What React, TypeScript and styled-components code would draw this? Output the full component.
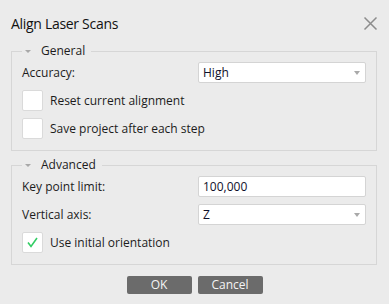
import React from 'react';
import styled, { createGlobalStyle } from 'styled-components';

const GlobalStyle = createGlobalStyle`
  html, body {
    margin: 0;
    padding: 0;
    background: #ebebeb;
  }
  body {
    font-family: 'Open Sans', 'Noto Sans', sans-serif;
    font-size: 12px;
    color: #1c1c1c;
  }
`;

const Dialog = styled.div`
  width: 389px;
  height: 304px;
  box-sizing: border-box;
  padding: 0 12px 0 11px;
  display: flex;
  flex-direction: column;
`;

const Header = styled.div`
  height: 44px;
  display: flex;
  align-items: center;
  justify-content: space-between;
`;

const Title = styled.h1`
  margin: 0;
  font-size: 14px;
  letter-spacing: -0.3px;
  font-weight: normal;
  color: #111;
  padding-top: 3px;
`;

const Close = styled.button`
  border: 0;
  background: none;
  padding: 0;
  margin: 2px -1px 0 0;
  width: 15px;
  height: 15px;
  display: flex;
  cursor: pointer;
`;

const Group = styled.fieldset<{ $gap?: number }>`
  margin: ${p => p.$gap ?? 0}px 0 0;
  padding: 4px 10px 11px;
  border: 1px solid #d6d6d6;
  display: flex;
  flex-direction: column;
  gap: 7px;
  min-width: 0;
`;

const Legend = styled.legend`
  padding: 0 6px 0 3px;
  line-height: 14px;
  display: flex;
  align-items: center;
  gap: 10px;
  color: #1c1c1c;
`;

const Caret = styled.span`
  width: 0;
  height: 0;
  border-left: 3px solid transparent;
  border-right: 3px solid transparent;
  border-top: 3px solid #a8a8a8;
  margin-top: 1px;
`;

const Row = styled.div`
  display: grid;
  grid-template-columns: 176px 1fr;
  align-items: center;
  height: 21px;
`;

const Field = styled.div`
  height: 21px;
  box-sizing: border-box;
  background: #fff;
  border: 1px solid #d4d4d4;
  border-radius: 2px;
  display: flex;
  align-items: center;
  justify-content: space-between;
  padding: 0 5px 0 4px;
  color: #10102a;
`;

const Arrow = styled.span`
  width: 0;
  height: 0;
  border-left: 3.5px solid transparent;
  border-right: 3.5px solid transparent;
  border-top: 4px solid #a9a9a9;
`;

const Check = styled.label`
  display: flex;
  align-items: center;
  gap: 7px;
  height: 21px;
`;

const Box = styled.span`
  width: 21px;
  height: 21px;
  box-sizing: border-box;
  background: #fff;
  border: 1px solid #dadada;
  border-radius: 2px;
  display: flex;
  align-items: center;
  justify-content: center;
`;

const Footer = styled.div`
  display: flex;
  justify-content: center;
  gap: 6px;
  margin-top: 11px;
  padding-left: 1px;
`;

const Button = styled.button`
  width: 65px;
  height: 18px;
  border: 0;
  border-radius: 2px;
  background: #6b6b6b;
  color: #f4f4f4;
  font-family: inherit;
  font-size: 12px;
  padding: 0;
  line-height: 18px;
`;

const Select = ({ value }: { value: string }) => (
  <Field>
    <span>{value}</span>
    <Arrow />
  </Field>
);

const Option = ({ label, checked }: { label: string; checked?: boolean }) => (
  <Check>
    <Box>
      {checked && (
        <svg width="11" height="11" viewBox="0 0 11 11">
          <path d="M1 5.5 L4 9.5 L10 1" fill="none" stroke="#32cd64" strokeWidth="1.6" />
        </svg>
      )}
    </Box>
    {label}
  </Check>
);

export default function App() {
  return (
    <>
      <GlobalStyle />
      <Dialog>
        <Header>
          <Title>Align Laser Scans</Title>
          <Close aria-label="Close">
            <svg width="15" height="15" viewBox="0 0 15 15">
              <path d="M1.5 1.5 L13.5 13.5 M13.5 1.5 L1.5 13.5" stroke="#8c8c8c" strokeWidth="1.5" />
            </svg>
          </Close>
        </Header>
        <Group>
          <Legend><Caret />General</Legend>
          <Row>
            <span>Accuracy:</span>
            <Select value="High" />
          </Row>
          <Option label="Reset current alignment" />
          <Option label="Save project after each step" />
        </Group>
        <Group $gap={7}>
          <Legend><Caret />Advanced</Legend>
          <Row>
            <span>Key point limit:</span>
            <Field>100,000</Field>
          </Row>
          <Row>
            <span>Vertical axis:</span>
            <Select value="Z" />
          </Row>
          <Option label="Use initial orientation" checked />
        </Group>
        <Footer>
          <Button>OK</Button>
          <Button>Cancel</Button>
        </Footer>
      </Dialog>
    </>
  );
}
